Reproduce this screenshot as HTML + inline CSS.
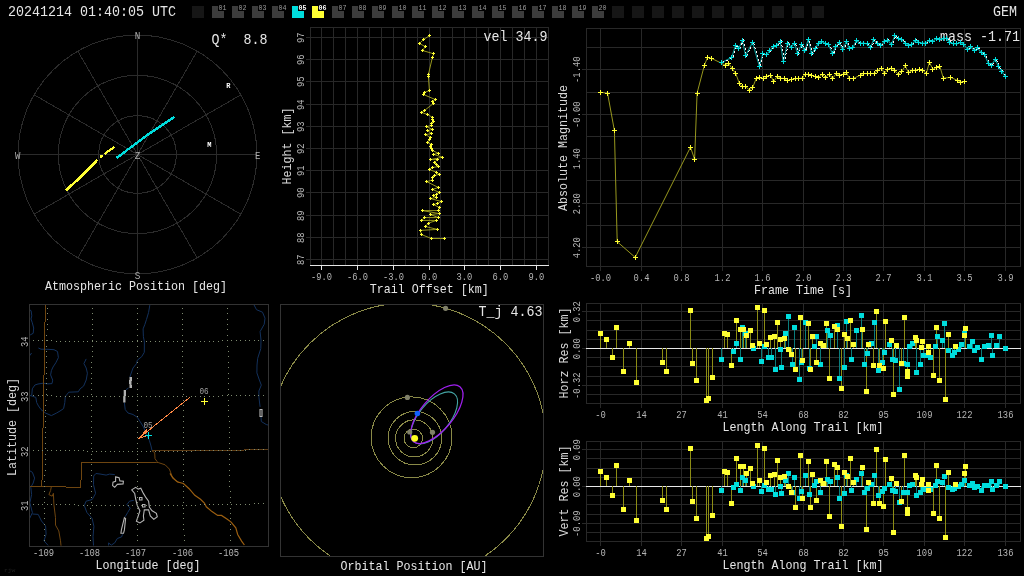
<!DOCTYPE html>
<html lang="en">
<head>
<meta charset="utf-8">
<title>GEM 20241214 01:40:05 UTC</title>
<style>
html,body{margin:0;padding:0;background:#000;overflow:hidden}
svg{display:block;will-change:transform;transform:translateZ(0)}
text{font-family:"Liberation Mono",monospace;white-space:pre}
</style>
</head>
<body>
<svg width="1024" height="576" viewBox="0 0 1024 576">
<rect width="1024" height="576" fill="#000"/>
<g id="header">
<text x="8" y="16.1" font-size="14" fill="#e6e6e6" textLength="168.0" lengthAdjust="spacingAndGlyphs" >20241214 01:40:05 UTC</text>
<text x="1017" y="16.1" font-size="14" fill="#e6e6e6" textLength="24.0" lengthAdjust="spacingAndGlyphs" text-anchor="end" >GEM</text>
<rect x="192" y="6" width="12" height="12" fill="#161616"/>
<path d="M212 6h6v5h6v7h-12z" fill="#3c3c3c"/>
<text x="218.4" y="10" font-size="7.5" fill="#9a9a9a" textLength="8.0" lengthAdjust="spacingAndGlyphs" >01</text>
<path d="M232 6h6v5h6v7h-12z" fill="#3c3c3c"/>
<text x="238.4" y="10" font-size="7.5" fill="#9a9a9a" textLength="8.0" lengthAdjust="spacingAndGlyphs" >02</text>
<path d="M252 6h6v5h6v7h-12z" fill="#3c3c3c"/>
<text x="258.4" y="10" font-size="7.5" fill="#9a9a9a" textLength="8.0" lengthAdjust="spacingAndGlyphs" >03</text>
<path d="M272 6h6v5h6v7h-12z" fill="#3c3c3c"/>
<text x="278.4" y="10" font-size="7.5" fill="#9a9a9a" textLength="8.0" lengthAdjust="spacingAndGlyphs" >04</text>
<path d="M292 6h6v5h6v7h-12z" fill="#00dddd"/>
<text x="298.4" y="10" font-size="7.5" fill="#ffffff" textLength="8.0" lengthAdjust="spacingAndGlyphs" font-weight="bold" >05</text>
<path d="M312 6h6v5h6v7h-12z" fill="#ffff33"/>
<text x="318.4" y="10" font-size="7.5" fill="#ffffff" textLength="8.0" lengthAdjust="spacingAndGlyphs" font-weight="bold" >06</text>
<path d="M332 6h6v5h6v7h-12z" fill="#3c3c3c"/>
<text x="338.4" y="10" font-size="7.5" fill="#9a9a9a" textLength="8.0" lengthAdjust="spacingAndGlyphs" >07</text>
<path d="M352 6h6v5h6v7h-12z" fill="#3c3c3c"/>
<text x="358.4" y="10" font-size="7.5" fill="#9a9a9a" textLength="8.0" lengthAdjust="spacingAndGlyphs" >08</text>
<path d="M372 6h6v5h6v7h-12z" fill="#3c3c3c"/>
<text x="378.4" y="10" font-size="7.5" fill="#9a9a9a" textLength="8.0" lengthAdjust="spacingAndGlyphs" >09</text>
<path d="M392 6h6v5h6v7h-12z" fill="#3c3c3c"/>
<text x="398.4" y="10" font-size="7.5" fill="#9a9a9a" textLength="8.0" lengthAdjust="spacingAndGlyphs" >10</text>
<path d="M412 6h6v5h6v7h-12z" fill="#3c3c3c"/>
<text x="418.4" y="10" font-size="7.5" fill="#9a9a9a" textLength="8.0" lengthAdjust="spacingAndGlyphs" >11</text>
<path d="M432 6h6v5h6v7h-12z" fill="#3c3c3c"/>
<text x="438.4" y="10" font-size="7.5" fill="#9a9a9a" textLength="8.0" lengthAdjust="spacingAndGlyphs" >12</text>
<path d="M452 6h6v5h6v7h-12z" fill="#3c3c3c"/>
<text x="458.4" y="10" font-size="7.5" fill="#9a9a9a" textLength="8.0" lengthAdjust="spacingAndGlyphs" >13</text>
<path d="M472 6h6v5h6v7h-12z" fill="#3c3c3c"/>
<text x="478.4" y="10" font-size="7.5" fill="#9a9a9a" textLength="8.0" lengthAdjust="spacingAndGlyphs" >14</text>
<path d="M492 6h6v5h6v7h-12z" fill="#3c3c3c"/>
<text x="498.4" y="10" font-size="7.5" fill="#9a9a9a" textLength="8.0" lengthAdjust="spacingAndGlyphs" >15</text>
<path d="M512 6h6v5h6v7h-12z" fill="#3c3c3c"/>
<text x="518.4" y="10" font-size="7.5" fill="#9a9a9a" textLength="8.0" lengthAdjust="spacingAndGlyphs" >16</text>
<path d="M532 6h6v5h6v7h-12z" fill="#3c3c3c"/>
<text x="538.4" y="10" font-size="7.5" fill="#9a9a9a" textLength="8.0" lengthAdjust="spacingAndGlyphs" >17</text>
<path d="M552 6h6v5h6v7h-12z" fill="#3c3c3c"/>
<text x="558.4" y="10" font-size="7.5" fill="#9a9a9a" textLength="8.0" lengthAdjust="spacingAndGlyphs" >18</text>
<path d="M572 6h6v5h6v7h-12z" fill="#3c3c3c"/>
<text x="578.4" y="10" font-size="7.5" fill="#9a9a9a" textLength="8.0" lengthAdjust="spacingAndGlyphs" >19</text>
<path d="M592 6h6v5h6v7h-12z" fill="#3c3c3c"/>
<text x="598.4" y="10" font-size="7.5" fill="#9a9a9a" textLength="8.0" lengthAdjust="spacingAndGlyphs" >20</text>
<rect x="612" y="6" width="12" height="12" fill="#161616"/>
<rect x="632" y="6" width="12" height="12" fill="#161616"/>
<rect x="652" y="6" width="12" height="12" fill="#161616"/>
<rect x="672" y="6" width="12" height="12" fill="#161616"/>
<rect x="692" y="6" width="12" height="12" fill="#161616"/>
<rect x="712" y="6" width="12" height="12" fill="#161616"/>
<rect x="732" y="6" width="12" height="12" fill="#161616"/>
<rect x="752" y="6" width="12" height="12" fill="#161616"/>
<rect x="772" y="6" width="12" height="12" fill="#161616"/>
<rect x="792" y="6" width="12" height="12" fill="#161616"/>
<rect x="812" y="6" width="12" height="12" fill="#161616"/>
</g>
<g id="polar">
<g fill="none" stroke="#2b2b2b" stroke-width="1" shape-rendering="crispEdges">
<circle cx="137.5" cy="154.5" r="38.9"/>
<circle cx="137.5" cy="154.5" r="79.2"/>
<circle cx="137.5" cy="154.5" r="119.4"/>
<line x1="137.5" y1="273.9" x2="137.5" y2="35.1"/>
<line x1="77.8" y1="257.9" x2="197.2" y2="51.1"/>
<line x1="34.1" y1="214.2" x2="240.9" y2="94.8"/>
<line x1="18.1" y1="154.5" x2="256.9" y2="154.5"/>
<line x1="34.1" y1="94.8" x2="240.9" y2="214.2"/>
<line x1="77.8" y1="51.1" x2="197.2" y2="257.9"/>
</g>
<text x="137.6" y="39.2" font-size="10" fill="#b0b0b0" textLength="5.6" lengthAdjust="spacingAndGlyphs" text-anchor="middle" >N</text>
<text x="137.6" y="279" font-size="10" fill="#b0b0b0" textLength="5.6" lengthAdjust="spacingAndGlyphs" text-anchor="middle" >S</text>
<text x="17.8" y="158.6" font-size="10" fill="#b0b0b0" textLength="5.4" lengthAdjust="spacingAndGlyphs" text-anchor="middle" >W</text>
<text x="257.8" y="158.6" font-size="10" fill="#b0b0b0" textLength="5.4" lengthAdjust="spacingAndGlyphs" text-anchor="middle" >E</text>
<text x="137.6" y="158.7" font-size="10" fill="#b0b0b0" textLength="5.6" lengthAdjust="spacingAndGlyphs" text-anchor="middle" >Z</text>
<text x="228.3" y="88.2" font-size="7" fill="#ffffff" text-anchor="middle" font-weight="bold" >R</text>
<text x="209.4" y="147.2" font-size="7" fill="#ffffff" text-anchor="middle" font-weight="bold" >M</text>
<g fill="none" stroke-linecap="butt" shape-rendering="crispEdges">
<path d="M116.3 157.9L122.2 154L128.2 149.2L134.3 144.9L141.8 139.2L148 134.6L154.2 130.4L164 123.8L174.5 116.8" stroke="#00dddd" stroke-width="2.4"/>
<path d="M65.6 190.4L72 185L76 181L82 176L88 169.5L97.2 159.8" stroke="#ffff33" stroke-width="2.8"/>
<path d="M100 154.5h2v0.5h0.5v2h-0.5v0.5h-2v-0.5h-0.5v-2h0.5z" fill="#ffff33" stroke="none"/>
<path d="M104.5 154L114.5 146.7" stroke="#ffff33" stroke-width="2.2"/>
</g>
<text x="267.5" y="44.3" font-size="14" fill="#e6e6e6" textLength="56.0" lengthAdjust="spacingAndGlyphs" text-anchor="end" >Q*  8.8</text>
<text x="136" y="290.3" font-size="13" fill="#e6e6e6" textLength="182.0" lengthAdjust="spacingAndGlyphs" text-anchor="middle" >Atmospheric Position [deg]</text>
</g>
<g id="trail">
<rect x="306" y="37" width="243" height="1" fill="#282828"/>
<rect x="306" y="59" width="243" height="1" fill="#282828"/>
<rect x="306" y="81" width="243" height="1" fill="#282828"/>
<rect x="306" y="104" width="243" height="1" fill="#282828"/>
<rect x="306" y="126" width="243" height="1" fill="#282828"/>
<rect x="306" y="148" width="243" height="1" fill="#282828"/>
<rect x="306" y="170" width="243" height="1" fill="#282828"/>
<rect x="306" y="192" width="243" height="1" fill="#282828"/>
<rect x="306" y="215" width="243" height="1" fill="#282828"/>
<rect x="306" y="237" width="243" height="1" fill="#282828"/>
<rect x="306" y="259" width="243" height="1" fill="#282828"/>
<rect x="321" y="27" width="1" height="239" fill="#282828"/>
<rect x="333" y="27" width="1" height="239" fill="#282828"/>
<rect x="345" y="27" width="1" height="239" fill="#282828"/>
<rect x="357" y="27" width="1" height="239" fill="#282828"/>
<rect x="369" y="27" width="1" height="239" fill="#282828"/>
<rect x="381" y="27" width="1" height="239" fill="#282828"/>
<rect x="393" y="27" width="1" height="239" fill="#282828"/>
<rect x="405" y="27" width="1" height="239" fill="#282828"/>
<rect x="417" y="27" width="1" height="239" fill="#282828"/>
<rect x="429" y="27" width="1" height="239" fill="#282828"/>
<rect x="440" y="27" width="1" height="239" fill="#282828"/>
<rect x="452" y="27" width="1" height="239" fill="#282828"/>
<rect x="464" y="27" width="1" height="239" fill="#282828"/>
<rect x="476" y="27" width="1" height="239" fill="#282828"/>
<rect x="488" y="27" width="1" height="239" fill="#282828"/>
<rect x="500" y="27" width="1" height="239" fill="#282828"/>
<rect x="512" y="27" width="1" height="239" fill="#282828"/>
<rect x="524" y="27" width="1" height="239" fill="#282828"/>
<rect x="536" y="27" width="1" height="239" fill="#282828"/>
<rect x="310" y="27" width="239" height="1" fill="#282828"/>
<rect x="310" y="27" width="1" height="239" fill="#282828"/>
<rect x="548" y="27" width="1" height="239" fill="#282828"/>
<rect x="310" y="265" width="239" height="1" fill="#e6e6e6"/>
<rect x="321" y="265" width="1" height="5" fill="#e6e6e6"/>
<text x="321.5" y="280.3" font-size="10" fill="#b4b4b4" textLength="21.0" lengthAdjust="spacingAndGlyphs" text-anchor="middle" >-9.0</text>
<rect x="357" y="265" width="1" height="5" fill="#e6e6e6"/>
<text x="357.5" y="280.3" font-size="10" fill="#b4b4b4" textLength="21.0" lengthAdjust="spacingAndGlyphs" text-anchor="middle" >-6.0</text>
<rect x="393" y="265" width="1" height="5" fill="#e6e6e6"/>
<text x="393.5" y="280.3" font-size="10" fill="#b4b4b4" textLength="21.0" lengthAdjust="spacingAndGlyphs" text-anchor="middle" >-3.0</text>
<rect x="429" y="265" width="1" height="5" fill="#e6e6e6"/>
<text x="429.5" y="280.3" font-size="10" fill="#b4b4b4" textLength="15.8" lengthAdjust="spacingAndGlyphs" text-anchor="middle" >0.0</text>
<rect x="464" y="265" width="1" height="5" fill="#e6e6e6"/>
<text x="464.5" y="280.3" font-size="10" fill="#b4b4b4" textLength="15.8" lengthAdjust="spacingAndGlyphs" text-anchor="middle" >3.0</text>
<rect x="500" y="265" width="1" height="5" fill="#e6e6e6"/>
<text x="500.5" y="280.3" font-size="10" fill="#b4b4b4" textLength="15.8" lengthAdjust="spacingAndGlyphs" text-anchor="middle" >6.0</text>
<rect x="536" y="265" width="1" height="5" fill="#e6e6e6"/>
<text x="536.5" y="280.3" font-size="10" fill="#b4b4b4" textLength="15.8" lengthAdjust="spacingAndGlyphs" text-anchor="middle" >9.0</text>
<text x="304" y="37.7" font-size="10" fill="#b4b4b4" textLength="10.6" lengthAdjust="spacingAndGlyphs" text-anchor="middle" transform="rotate(-90 304 37.7)" >97</text>
<text x="304" y="59.7" font-size="10" fill="#b4b4b4" textLength="10.6" lengthAdjust="spacingAndGlyphs" text-anchor="middle" transform="rotate(-90 304 59.7)" >96</text>
<text x="304" y="81.7" font-size="10" fill="#b4b4b4" textLength="10.6" lengthAdjust="spacingAndGlyphs" text-anchor="middle" transform="rotate(-90 304 81.7)" >95</text>
<text x="304" y="104.7" font-size="10" fill="#b4b4b4" textLength="10.6" lengthAdjust="spacingAndGlyphs" text-anchor="middle" transform="rotate(-90 304 104.7)" >94</text>
<text x="304" y="126.7" font-size="10" fill="#b4b4b4" textLength="10.6" lengthAdjust="spacingAndGlyphs" text-anchor="middle" transform="rotate(-90 304 126.7)" >93</text>
<text x="304" y="148.7" font-size="10" fill="#b4b4b4" textLength="10.6" lengthAdjust="spacingAndGlyphs" text-anchor="middle" transform="rotate(-90 304 148.7)" >92</text>
<text x="304" y="170.7" font-size="10" fill="#b4b4b4" textLength="10.6" lengthAdjust="spacingAndGlyphs" text-anchor="middle" transform="rotate(-90 304 170.7)" >91</text>
<text x="304" y="192.7" font-size="10" fill="#b4b4b4" textLength="10.6" lengthAdjust="spacingAndGlyphs" text-anchor="middle" transform="rotate(-90 304 192.7)" >90</text>
<text x="304" y="215.7" font-size="10" fill="#b4b4b4" textLength="10.6" lengthAdjust="spacingAndGlyphs" text-anchor="middle" transform="rotate(-90 304 215.7)" >89</text>
<text x="304" y="237.7" font-size="10" fill="#b4b4b4" textLength="10.6" lengthAdjust="spacingAndGlyphs" text-anchor="middle" transform="rotate(-90 304 237.7)" >88</text>
<text x="304" y="259.7" font-size="10" fill="#b4b4b4" textLength="10.6" lengthAdjust="spacingAndGlyphs" text-anchor="middle" transform="rotate(-90 304 259.7)" >87</text>
<text x="291.3" y="146" font-size="13" fill="#d8d8d8" textLength="77.0" lengthAdjust="spacingAndGlyphs" text-anchor="middle" transform="rotate(-90 291.3 146)" >Height [km]</text>
<text x="429.3" y="293.3" font-size="13" fill="#e6e6e6" textLength="119.0" lengthAdjust="spacingAndGlyphs" text-anchor="middle" >Trail Offset [km]</text>
<text x="547.6" y="41" font-size="14" fill="#e6e6e6" textLength="64.0" lengthAdjust="spacingAndGlyphs" text-anchor="end" >vel 34.9</text>
<path d="M429.4 35.7L423.5 39.6L419.4 43.5L425.3 46.6L422.5 50.5L433.7 53.8L432.4 57.4L428.4 74.6L428.4 76.6L429.4 90.6L424.3 92.5L423.5 94.5L435.4 99.6L432.4 101.4L433.4 103.5L424.7 110.3L421.5 112.5L427.5 114.4L432.4 117.4L432.4 119.6L433.4 121.5L431.4 123.5L431.4 125.5L426.5 126.6L432.4 129.4L427.5 130.6L431.4 133.6L425.5 134.6L430.4 137.5L429.4 139.4L427.5 142.4L431.4 144.5L430.4 146.6L431.6 148.7L432.4 150.5L438.4 153.3L433.7 154.4L442.5 157.2L430.4 159.6L437.4 159.6L434.4 162.6L436.5 164.4L438.4 166.6L432.4 167.5L429.4 169.5L436.5 172.3L439.4 174.4L434.4 175.4L432.4 177.8L432.4 180.2L426.5 181.5L438.4 187.5L432.4 189.4L439.4 192.4L436.5 194.2L433.4 195.4L436.5 197.5L430.4 198.5L441.3 201.5L437.4 203.5L433.4 204.5L439.4 207.5L438.4 210.6L422.5 210.6L439.4 213.6L430.4 214.5L438.4 217.6L424.3 217.6L421.5 220.4L436.5 220.4L428.4 223.1L425.3 226.5L437.4 229.4L420.4 230.4L421.5 234.6L431.4 238.5L444.4 238.5" fill="none" stroke="#98981e" stroke-width="1"/>
<path d="M428 35h3v1h-3zM429 34h1v3h-1zM422 39h3v1h-3zM423 38h1v3h-1zM418 43h3v1h-3zM419 42h1v3h-1zM424 46h3v1h-3zM425 45h1v3h-1zM421 50h3v1h-3zM422 49h1v3h-1zM432 53h3v1h-3zM433 52h1v3h-1zM431 57h3v1h-3zM432 56h1v3h-1zM427 74h3v1h-3zM428 73h1v3h-1zM427 76h3v1h-3zM428 75h1v3h-1zM428 90h3v1h-3zM429 89h1v3h-1zM423 92h3v1h-3zM424 91h1v3h-1zM422 94h3v1h-3zM423 93h1v3h-1zM434 99h3v1h-3zM435 98h1v3h-1zM431 101h3v1h-3zM432 100h1v3h-1zM432 103h3v1h-3zM433 102h1v3h-1zM423 110h3v1h-3zM424 109h1v3h-1zM420 112h3v1h-3zM421 111h1v3h-1zM426 114h3v1h-3zM427 113h1v3h-1zM431 117h3v1h-3zM432 116h1v3h-1zM431 119h3v1h-3zM432 118h1v3h-1zM432 121h3v1h-3zM433 120h1v3h-1zM430 123h3v1h-3zM431 122h1v3h-1zM430 125h3v1h-3zM431 124h1v3h-1zM425 126h3v1h-3zM426 125h1v3h-1zM431 129h3v1h-3zM432 128h1v3h-1zM426 130h3v1h-3zM427 129h1v3h-1zM430 133h3v1h-3zM431 132h1v3h-1zM424 134h3v1h-3zM425 133h1v3h-1zM429 137h3v1h-3zM430 136h1v3h-1zM428 139h3v1h-3zM429 138h1v3h-1zM426 142h3v1h-3zM427 141h1v3h-1zM430 144h3v1h-3zM431 143h1v3h-1zM429 146h3v1h-3zM430 145h1v3h-1zM430 148h3v1h-3zM431 147h1v3h-1zM431 150h3v1h-3zM432 149h1v3h-1zM437 153h3v1h-3zM438 152h1v3h-1zM432 154h3v1h-3zM433 153h1v3h-1zM441 157h3v1h-3zM442 156h1v3h-1zM429 159h3v1h-3zM430 158h1v3h-1zM436 159h3v1h-3zM437 158h1v3h-1zM433 162h3v1h-3zM434 161h1v3h-1zM435 164h3v1h-3zM436 163h1v3h-1zM437 166h3v1h-3zM438 165h1v3h-1zM431 167h3v1h-3zM432 166h1v3h-1zM428 169h3v1h-3zM429 168h1v3h-1zM435 172h3v1h-3zM436 171h1v3h-1zM438 174h3v1h-3zM439 173h1v3h-1zM433 175h3v1h-3zM434 174h1v3h-1zM431 177h3v1h-3zM432 176h1v3h-1zM431 180h3v1h-3zM432 179h1v3h-1zM425 181h3v1h-3zM426 180h1v3h-1zM437 187h3v1h-3zM438 186h1v3h-1zM431 189h3v1h-3zM432 188h1v3h-1zM438 192h3v1h-3zM439 191h1v3h-1zM435 194h3v1h-3zM436 193h1v3h-1zM432 195h3v1h-3zM433 194h1v3h-1zM435 197h3v1h-3zM436 196h1v3h-1zM429 198h3v1h-3zM430 197h1v3h-1zM440 201h3v1h-3zM441 200h1v3h-1zM436 203h3v1h-3zM437 202h1v3h-1zM432 204h3v1h-3zM433 203h1v3h-1zM438 207h3v1h-3zM439 206h1v3h-1zM437 210h3v1h-3zM438 209h1v3h-1zM421 210h3v1h-3zM422 209h1v3h-1zM438 213h3v1h-3zM439 212h1v3h-1zM429 214h3v1h-3zM430 213h1v3h-1zM437 217h3v1h-3zM438 216h1v3h-1zM423 217h3v1h-3zM424 216h1v3h-1zM420 220h3v1h-3zM421 219h1v3h-1zM435 220h3v1h-3zM436 219h1v3h-1zM427 223h3v1h-3zM428 222h1v3h-1zM424 226h3v1h-3zM425 225h1v3h-1zM436 229h3v1h-3zM437 228h1v3h-1zM419 230h3v1h-3zM420 229h1v3h-1zM420 234h3v1h-3zM421 233h1v3h-1zM430 238h3v1h-3zM431 237h1v3h-1zM443 238h3v1h-3zM444 237h1v3h-1z" fill="#ffff33" shape-rendering="crispEdges"/>
</g>
<g id="lc">
<rect x="586" y="47" width="435" height="1" fill="#282828"/>
<rect x="586" y="69" width="435" height="1" fill="#282828"/>
<rect x="586" y="92" width="435" height="1" fill="#282828"/>
<rect x="586" y="114" width="435" height="1" fill="#282828"/>
<rect x="586" y="136" width="435" height="1" fill="#282828"/>
<rect x="586" y="158" width="435" height="1" fill="#282828"/>
<rect x="586" y="180" width="435" height="1" fill="#282828"/>
<rect x="586" y="203" width="435" height="1" fill="#282828"/>
<rect x="586" y="225" width="435" height="1" fill="#282828"/>
<rect x="586" y="247" width="435" height="1" fill="#282828"/>
<rect x="600" y="28" width="1" height="239" fill="#282828"/>
<rect x="641" y="28" width="1" height="239" fill="#282828"/>
<rect x="681" y="28" width="1" height="239" fill="#282828"/>
<rect x="722" y="28" width="1" height="239" fill="#282828"/>
<rect x="762" y="28" width="1" height="239" fill="#282828"/>
<rect x="803" y="28" width="1" height="239" fill="#282828"/>
<rect x="843" y="28" width="1" height="239" fill="#282828"/>
<rect x="883" y="28" width="1" height="239" fill="#282828"/>
<rect x="924" y="28" width="1" height="239" fill="#282828"/>
<rect x="964" y="28" width="1" height="239" fill="#282828"/>
<rect x="1005" y="28" width="1" height="239" fill="#282828"/>
<rect x="586" y="28" width="435" height="1" fill="#282828"/>
<rect x="586" y="266" width="435" height="1" fill="#282828"/>
<rect x="586" y="28" width="1" height="239" fill="#282828"/>
<rect x="1020" y="28" width="1" height="239" fill="#282828"/>
<rect x="582" y="69" width="5" height="1" fill="#282828"/>
<rect x="582" y="114" width="5" height="1" fill="#282828"/>
<rect x="582" y="158" width="5" height="1" fill="#282828"/>
<rect x="582" y="203" width="5" height="1" fill="#282828"/>
<rect x="582" y="247" width="5" height="1" fill="#282828"/>
<rect x="600" y="266" width="1" height="5" fill="#282828"/>
<rect x="641" y="266" width="1" height="5" fill="#282828"/>
<rect x="681" y="266" width="1" height="5" fill="#282828"/>
<rect x="722" y="266" width="1" height="5" fill="#282828"/>
<rect x="762" y="266" width="1" height="5" fill="#282828"/>
<rect x="803" y="266" width="1" height="5" fill="#282828"/>
<rect x="843" y="266" width="1" height="5" fill="#282828"/>
<rect x="883" y="266" width="1" height="5" fill="#282828"/>
<rect x="924" y="266" width="1" height="5" fill="#282828"/>
<rect x="964" y="266" width="1" height="5" fill="#282828"/>
<rect x="1005" y="266" width="1" height="5" fill="#282828"/>
<text x="600.5" y="281.3" font-size="10" fill="#b4b4b4" textLength="21.2" lengthAdjust="spacingAndGlyphs" text-anchor="middle" >-0.0</text>
<text x="641.5" y="281.3" font-size="10" fill="#b4b4b4" textLength="15.9" lengthAdjust="spacingAndGlyphs" text-anchor="middle" >0.4</text>
<text x="681.5" y="281.3" font-size="10" fill="#b4b4b4" textLength="15.9" lengthAdjust="spacingAndGlyphs" text-anchor="middle" >0.8</text>
<text x="722.5" y="281.3" font-size="10" fill="#b4b4b4" textLength="15.9" lengthAdjust="spacingAndGlyphs" text-anchor="middle" >1.2</text>
<text x="762.5" y="281.3" font-size="10" fill="#b4b4b4" textLength="15.9" lengthAdjust="spacingAndGlyphs" text-anchor="middle" >1.6</text>
<text x="803.5" y="281.3" font-size="10" fill="#b4b4b4" textLength="15.9" lengthAdjust="spacingAndGlyphs" text-anchor="middle" >2.0</text>
<text x="843.5" y="281.3" font-size="10" fill="#b4b4b4" textLength="15.9" lengthAdjust="spacingAndGlyphs" text-anchor="middle" >2.3</text>
<text x="883.5" y="281.3" font-size="10" fill="#b4b4b4" textLength="15.9" lengthAdjust="spacingAndGlyphs" text-anchor="middle" >2.7</text>
<text x="924.5" y="281.3" font-size="10" fill="#b4b4b4" textLength="15.9" lengthAdjust="spacingAndGlyphs" text-anchor="middle" >3.1</text>
<text x="964.5" y="281.3" font-size="10" fill="#b4b4b4" textLength="15.9" lengthAdjust="spacingAndGlyphs" text-anchor="middle" >3.5</text>
<text x="1005.5" y="281.3" font-size="10" fill="#b4b4b4" textLength="15.9" lengthAdjust="spacingAndGlyphs" text-anchor="middle" >3.9</text>
<text x="580" y="69.7" font-size="10" fill="#b4b4b4" textLength="26.5" lengthAdjust="spacingAndGlyphs" text-anchor="middle" transform="rotate(-90 580 69.7)" >-1.40</text>
<text x="580" y="114.7" font-size="10" fill="#b4b4b4" textLength="26.5" lengthAdjust="spacingAndGlyphs" text-anchor="middle" transform="rotate(-90 580 114.7)" >-0.00</text>
<text x="580" y="158.7" font-size="10" fill="#b4b4b4" textLength="21.2" lengthAdjust="spacingAndGlyphs" text-anchor="middle" transform="rotate(-90 580 158.7)" >1.40</text>
<text x="580" y="203.7" font-size="10" fill="#b4b4b4" textLength="21.2" lengthAdjust="spacingAndGlyphs" text-anchor="middle" transform="rotate(-90 580 203.7)" >2.80</text>
<text x="580" y="247.7" font-size="10" fill="#b4b4b4" textLength="21.2" lengthAdjust="spacingAndGlyphs" text-anchor="middle" transform="rotate(-90 580 247.7)" >4.20</text>
<text x="567.4" y="148" font-size="13" fill="#d8d8d8" textLength="126.0" lengthAdjust="spacingAndGlyphs" text-anchor="middle" transform="rotate(-90 567.4 148)" >Absolute Magnitude</text>
<text x="803" y="294.3" font-size="13" fill="#e6e6e6" textLength="98.0" lengthAdjust="spacingAndGlyphs" text-anchor="middle" >Frame Time [s]</text>
<text x="1020" y="40.5" font-size="14" fill="#e6e6e6" textLength="80.0" lengthAdjust="spacingAndGlyphs" text-anchor="end" >mass -1.71</text>
<path d="M600.6 92.2L607.6 93.4L614.4 130.6L617.2 241.7L635.2 257.4L690.5 147.2L694.6 159.3L697.1 93.0L704.3 65.6L707.5 57.4L711.4 58.3L725.7 65.3L728.5 63.2L732.2 68.8L735.8 73.6L739.3 83.3L742.4 86.8L745.6 86.4L749.3 90.0L752.8 87.2L756.3 78.2L759.7 77.8L763.6 78.9L766.7 76.4L770.6 75.0L773.6 81.9L777.1 76.4L780.6 78.1L784.0 78.5L787.5 80.8L791.3 79.4L795.1 78.9L798.6 78.5L802.1 78.2L805.1 74.3L808.3 74.3L811.8 75.0L815.3 76.7L818.5 77.4L822.2 74.3L825.4 77.4L829.2 74.3L832.6 78.5L836.1 73.6L839.6 75.0L843.0 74.3L846.5 72.5L849.3 78.5L853.2 78.5L860.1 75.3L863.2 73.6L867.1 73.6L870.6 73.6L874.0 73.6L877.5 70.6L881.2 68.1L884.4 73.3L887.5 69.4L891.4 68.1L894.9 70.8L898.3 74.3L901.8 71.5L905.3 65.7L908.3 72.6L912.2 70.6L915.7 70.1L919.4 69.4L922.6 70.1L926.4 73.3L929.4 62.2L932.9 69.4L936.4 67.4L939.9 66.4L943.3 78.2L950.7 77.4L957.2 80.3L960.4 82.2L964.6 81.5" fill="none" stroke="#98981e" stroke-width="1"/>
<path d="M721.5 62.5L731.7 57.6L735.4 45.8L738.6 48.6L742.4 40.6L745.6 55.6L752.5 42.4L759.4 66.3L762.8 53.9L766.4 54.9L769.9 50.7L773.6 46.5L776.4 45.6L780.3 41.4L783.3 61.8L787.5 43.1L791.0 47.2L794.4 43.1L797.6 53.5L801.4 44.6L804.9 50.9L808.3 39.2L811.5 53.8L815.0 48.9L818.5 43.1L821.5 41.9L825.0 43.1L828.5 44.4L832.4 53.8L835.8 46.5L839.3 42.4L842.8 49.7L846.3 41.4L849.3 48.6L852.8 47.9L856.3 40.7L860.1 43.1L863.6 43.1L867.1 43.8L870.6 47.2L873.6 39.6L877.1 43.8L880.6 45.6L884.0 41.9L887.5 40.0L891.4 44.4L894.9 35.8L898.3 38.9L901.6 39.8L905.1 43.1L908.6 45.6L911.8 44.4L915.7 40.0L918.8 42.4L922.2 43.1L925.7 43.1L929.4 40.3L932.9 41.4L936.4 38.2L939.9 39.6L943.1 38.9L946.5 38.2L949.6 42.4L953.5 43.8L956.9 43.8L960.7 42.4L963.9 44.4L967.6 49.3L970.8 46.9L974.3 50.7L977.5 47.9L981.3 52.8L984.4 54.2L988.2 63.2L991.4 65.3L995.4 59.0L998.3 66.7L1001.8 71.5L1005.3 76.4" fill="none" stroke="#0a9090" stroke-width="1.2"/>
<path d="M722.5 62.5L732.7 57.6L736.4 45.8L739.6 48.6L743.4 40.6L746.6 55.6L753.5 42.4L760.4 66.3L763.8 53.9L767.4 54.9L770.9 50.7L774.6 46.5L777.4 45.6L781.3 41.4L784.3 61.8L788.5 43.1L792.0 47.2L795.4 43.1L798.6 53.5L802.4 44.6L805.9 50.9L809.3 39.2L812.5 53.8L816.0 48.9L819.5 43.1L822.5 41.9L826.0 43.1L829.5 44.4L833.4 53.8L836.8 46.5L840.3 42.4L843.8 49.7L847.3 41.4L850.3 48.6L853.8 47.9L857.3 40.7L861.1 43.1L864.6 43.1L868.1 43.8L871.6 47.2L874.6 39.6L878.1 43.8L881.6 45.6L885.0 41.9L888.5 40.0L892.4 44.4L895.9 35.8L899.3 38.9L902.6 39.8L906.1 43.1L909.6 45.6L912.8 44.4L916.7 40.0L919.8 42.4L923.2 43.1L926.7 43.1L930.4 40.3L933.9 41.4L937.4 38.2L940.9 39.6L944.1 38.9L947.5 38.2L950.6 42.4L954.5 43.8L957.9 43.8L961.7 42.4L964.9 44.4L968.6 49.3L971.8 46.9L975.3 50.7L978.5 47.9L982.3 52.8L985.4 54.2L989.2 63.2L992.4 65.3L996.4 59.0L999.3 66.7L1002.8 71.5L1006.3 76.4" fill="none" stroke="#fff4f4" stroke-width="1" stroke-dasharray="2 2" shape-rendering="crispEdges"/>
<path d="M598 92h5v1h-5zM600 90h1v5h-1zM605 93h5v1h-5zM607 91h1v5h-1zM612 130h5v1h-5zM614 128h1v5h-1zM615 241h5v1h-5zM617 239h1v5h-1zM633 257h5v1h-5zM635 255h1v5h-1zM688 147h5v1h-5zM690 145h1v5h-1zM692 159h5v1h-5zM694 157h1v5h-1zM695 93h5v1h-5zM697 91h1v5h-1zM702 65h5v1h-5zM704 63h1v5h-1zM705 57h5v1h-5zM707 55h1v5h-1zM709 58h5v1h-5zM711 56h1v5h-1zM723 65h5v1h-5zM725 63h1v5h-1zM726 63h5v1h-5zM728 61h1v5h-1zM730 68h5v1h-5zM732 66h1v5h-1zM733 73h5v1h-5zM735 71h1v5h-1zM737 83h5v1h-5zM739 81h1v5h-1zM740 86h5v1h-5zM742 84h1v5h-1zM743 86h5v1h-5zM745 84h1v5h-1zM747 90h5v1h-5zM749 88h1v5h-1zM750 87h5v1h-5zM752 85h1v5h-1zM754 78h5v1h-5zM756 76h1v5h-1zM757 77h5v1h-5zM759 75h1v5h-1zM761 78h5v1h-5zM763 76h1v5h-1zM764 76h5v1h-5zM766 74h1v5h-1zM768 75h5v1h-5zM770 73h1v5h-1zM771 81h5v1h-5zM773 79h1v5h-1zM775 76h5v1h-5zM777 74h1v5h-1zM778 78h5v1h-5zM780 76h1v5h-1zM782 78h5v1h-5zM784 76h1v5h-1zM785 80h5v1h-5zM787 78h1v5h-1zM789 79h5v1h-5zM791 77h1v5h-1zM793 78h5v1h-5zM795 76h1v5h-1zM796 78h5v1h-5zM798 76h1v5h-1zM800 78h5v1h-5zM802 76h1v5h-1zM803 74h5v1h-5zM805 72h1v5h-1zM806 74h5v1h-5zM808 72h1v5h-1zM809 75h5v1h-5zM811 73h1v5h-1zM813 76h5v1h-5zM815 74h1v5h-1zM816 77h5v1h-5zM818 75h1v5h-1zM820 74h5v1h-5zM822 72h1v5h-1zM823 77h5v1h-5zM825 75h1v5h-1zM827 74h5v1h-5zM829 72h1v5h-1zM830 78h5v1h-5zM832 76h1v5h-1zM834 73h5v1h-5zM836 71h1v5h-1zM837 75h5v1h-5zM839 73h1v5h-1zM841 74h5v1h-5zM843 72h1v5h-1zM844 72h5v1h-5zM846 70h1v5h-1zM847 78h5v1h-5zM849 76h1v5h-1zM851 78h5v1h-5zM853 76h1v5h-1zM858 75h5v1h-5zM860 73h1v5h-1zM861 73h5v1h-5zM863 71h1v5h-1zM865 73h5v1h-5zM867 71h1v5h-1zM868 73h5v1h-5zM870 71h1v5h-1zM872 73h5v1h-5zM874 71h1v5h-1zM875 70h5v1h-5zM877 68h1v5h-1zM879 68h5v1h-5zM881 66h1v5h-1zM882 73h5v1h-5zM884 71h1v5h-1zM885 69h5v1h-5zM887 67h1v5h-1zM889 68h5v1h-5zM891 66h1v5h-1zM892 70h5v1h-5zM894 68h1v5h-1zM896 74h5v1h-5zM898 72h1v5h-1zM899 71h5v1h-5zM901 69h1v5h-1zM903 65h5v1h-5zM905 63h1v5h-1zM906 72h5v1h-5zM908 70h1v5h-1zM910 70h5v1h-5zM912 68h1v5h-1zM913 70h5v1h-5zM915 68h1v5h-1zM917 69h5v1h-5zM919 67h1v5h-1zM920 70h5v1h-5zM922 68h1v5h-1zM924 73h5v1h-5zM926 71h1v5h-1zM927 62h5v1h-5zM929 60h1v5h-1zM930 69h5v1h-5zM932 67h1v5h-1zM934 67h5v1h-5zM936 65h1v5h-1zM937 66h5v1h-5zM939 64h1v5h-1zM941 78h5v1h-5zM943 76h1v5h-1zM948 77h5v1h-5zM950 75h1v5h-1zM955 80h5v1h-5zM957 78h1v5h-1zM958 82h5v1h-5zM960 80h1v5h-1zM962 81h5v1h-5zM964 79h1v5h-1z" fill="#ffff33" shape-rendering="crispEdges"/>
<path d="M719 62h5v1h-5zM721 60h1v5h-1zM729 57h5v1h-5zM731 55h1v5h-1zM733 45h5v1h-5zM735 43h1v5h-1zM736 48h5v1h-5zM738 46h1v5h-1zM740 40h5v1h-5zM742 38h1v5h-1zM743 55h5v1h-5zM745 53h1v5h-1zM750 42h5v1h-5zM752 40h1v5h-1zM757 66h5v1h-5zM759 64h1v5h-1zM760 53h5v1h-5zM762 51h1v5h-1zM764 54h5v1h-5zM766 52h1v5h-1zM767 50h5v1h-5zM769 48h1v5h-1zM771 46h5v1h-5zM773 44h1v5h-1zM774 45h5v1h-5zM776 43h1v5h-1zM778 41h5v1h-5zM780 39h1v5h-1zM781 61h5v1h-5zM783 59h1v5h-1zM785 43h5v1h-5zM787 41h1v5h-1zM789 47h5v1h-5zM791 45h1v5h-1zM792 43h5v1h-5zM794 41h1v5h-1zM795 53h5v1h-5zM797 51h1v5h-1zM799 44h5v1h-5zM801 42h1v5h-1zM802 50h5v1h-5zM804 48h1v5h-1zM806 39h5v1h-5zM808 37h1v5h-1zM809 53h5v1h-5zM811 51h1v5h-1zM813 48h5v1h-5zM815 46h1v5h-1zM816 43h5v1h-5zM818 41h1v5h-1zM819 41h5v1h-5zM821 39h1v5h-1zM823 43h5v1h-5zM825 41h1v5h-1zM826 44h5v1h-5zM828 42h1v5h-1zM830 53h5v1h-5zM832 51h1v5h-1zM833 46h5v1h-5zM835 44h1v5h-1zM837 42h5v1h-5zM839 40h1v5h-1zM840 49h5v1h-5zM842 47h1v5h-1zM844 41h5v1h-5zM846 39h1v5h-1zM847 48h5v1h-5zM849 46h1v5h-1zM850 47h5v1h-5zM852 45h1v5h-1zM854 40h5v1h-5zM856 38h1v5h-1zM858 43h5v1h-5zM860 41h1v5h-1zM861 43h5v1h-5zM863 41h1v5h-1zM865 43h5v1h-5zM867 41h1v5h-1zM868 47h5v1h-5zM870 45h1v5h-1zM871 39h5v1h-5zM873 37h1v5h-1zM875 43h5v1h-5zM877 41h1v5h-1zM878 45h5v1h-5zM880 43h1v5h-1zM882 41h5v1h-5zM884 39h1v5h-1zM885 40h5v1h-5zM887 38h1v5h-1zM889 44h5v1h-5zM891 42h1v5h-1zM892 35h5v1h-5zM894 33h1v5h-1zM896 38h5v1h-5zM898 36h1v5h-1zM899 39h5v1h-5zM901 37h1v5h-1zM903 43h5v1h-5zM905 41h1v5h-1zM906 45h5v1h-5zM908 43h1v5h-1zM909 44h5v1h-5zM911 42h1v5h-1zM913 40h5v1h-5zM915 38h1v5h-1zM916 42h5v1h-5zM918 40h1v5h-1zM920 43h5v1h-5zM922 41h1v5h-1zM923 43h5v1h-5zM925 41h1v5h-1zM927 40h5v1h-5zM929 38h1v5h-1zM930 41h5v1h-5zM932 39h1v5h-1zM934 38h5v1h-5zM936 36h1v5h-1zM937 39h5v1h-5zM939 37h1v5h-1zM941 38h5v1h-5zM943 36h1v5h-1zM944 38h5v1h-5zM946 36h1v5h-1zM947 42h5v1h-5zM949 40h1v5h-1zM951 43h5v1h-5zM953 41h1v5h-1zM954 43h5v1h-5zM956 41h1v5h-1zM958 42h5v1h-5zM960 40h1v5h-1zM961 44h5v1h-5zM963 42h1v5h-1zM965 49h5v1h-5zM967 47h1v5h-1zM968 46h5v1h-5zM970 44h1v5h-1zM972 50h5v1h-5zM974 48h1v5h-1zM975 47h5v1h-5zM977 45h1v5h-1zM979 52h5v1h-5zM981 50h1v5h-1zM982 54h5v1h-5zM984 52h1v5h-1zM986 63h5v1h-5zM988 61h1v5h-1zM989 65h5v1h-5zM991 63h1v5h-1zM993 59h5v1h-5zM995 57h1v5h-1zM996 66h5v1h-5zM998 64h1v5h-1zM999 71h5v1h-5zM1001 69h1v5h-1zM1003 76h5v1h-5zM1005 74h1v5h-1z" fill="#00dddd" shape-rendering="crispEdges"/>
</g>
<g id="map">
<clipPath id="mc"><rect x="29" y="304" width="239" height="242"/></clipPath>
<g clip-path="url(#mc)" fill="none" stroke-width="1">
<path d="M29.7 309.8L31.1 310.7L31.8 315.9L31 319L32.3 322.8L33.7 328L33.2 333.3L30.1 335" stroke="#13315c" stroke-width="1"/>
<path d="M30 355.5L31.5 353" stroke="#13315c" stroke-width="1"/>
<path d="M38.4 348L41 349.2L48 349.3L54 349.7L57.5 351.5L58.4 357.6L55.8 362.8L53 367L51.4 370.6L50.6 374.9L52.7 380.1L52 383.6L48 383.9L43.3 383.2L38 384L34.9 385L32.3 388.8L31.8 394.9L30.1 395.8" stroke="#13315c" stroke-width="1"/>
<path d="M30.6 395.6L35.8 397.4L36.7 402.6L38.5 406L41 409.5L45.4 413L51.4 415.6L56.6 413L60 411L63.6 408.6L64.8 402.6L65.3 396.5L68.8 392.2L78.3 391.8L80.1 388.8L83.6 386.1L86.2 380L87.4 373.2L86.2 368L83.9 363.6L86.2 358.9" stroke="#13315c" stroke-width="1"/>
<path d="M149.8 305.1L148.6 312.4L146.5 319.4L144.8 324.6L143.1 328.9L143.4 336.7L144.4 341.9L144.3 352.3L141.7 356.7L137.3 360.2L136.5 363.6L133 368L130.9 374L129.9 377" stroke="#13315c" stroke-width="1"/>
<path d="M128.6 388L126 389.7" stroke="#13315c" stroke-width="1"/>
<path d="M124.4 402.6L125.2 409.5L128 413L133 414.5L137.3 417.3L140 421.4L143.4 426.9L146 433L149.5 440.8L151 446L152.1 450.7" stroke="#13315c" stroke-width="1"/>
<path d="M254 304.9L256.5 309.7L262.5 312.2L265 318.2L264.2 324.3L260.1 331.6L261 340L260.8 348.6L257.7 358.3L257 365L256.9 372.9L259 379L261.3 385.1L258.9 391L258.9 397.2L260.1 406.9" stroke="#13315c" stroke-width="1"/>
<path d="M261 417L261.3 421.5L266.2 424.5L268 425" stroke="#13315c" stroke-width="1"/>
<path d="M29.6 470.7L32.4 472.3L34.6 478.1L33.2 483L30.8 487.2L31.6 494.6L29.9 502.8L32.4 512.7L29.6 518.5" stroke="#13315c" stroke-width="1"/>
<path d="M32.4 514L38.2 514.4L41.5 521L45.6 525.9L46.1 534.2L44 540.8L48.1 545.4" stroke="#13315c" stroke-width="1"/>
<path d="M114.8 474.6L109.6 474.1L106.1 475.1L100 474L95.9 473.5L93.7 476L93.5 484.7L95.6 493.4L92.2 499.5L86.1 501.2L84.3 505.6L86.9 512.5L92.2 518.6L93.9 526.4L93 536.8L93.5 545.5" stroke="#13315c" stroke-width="1"/>
<path d="M133.8 500.3L129.5 501.2L126.9 504.7L130.3 508.2L127.7 512.5L125.1 516.8" stroke="#13315c" stroke-width="1"/>
<path d="M122.5 534.2L121.7 536.8L117.3 538.5L114.7 542.9L111.3 545.1L108.6 542.9L108.6 545.5" stroke="#13315c" stroke-width="1"/>
<path d="M152 450.5H243.5M243.5 449.5H268" stroke="#5e3c14" shape-rendering="crispEdges"/>
<path d="M45.5 304V322M44.5 322V375M43.5 375V428M42.5 428V480M41.5 480V486" stroke="#6e4510"/>
<path d="M29 486.5H66M66 487.5H81M80.5 487V480M81.5 480V462M81 462.5H156.4" stroke="#6e4510"/>
<path d="M156.4 462.5L158.1 462.5L165.1 464.8L169.4 469.1L172 476L176.4 481.3L180 482.6" stroke="#6e4510"/>
<path d="M152 450.9L154.7 452.6L155 458.7L157.3 461.8" stroke="#6e4510"/>
<path d="M51.4 486.3L50.6 490.5L48.9 494.6L52.2 496.2L53.4 493.3L53.9 504.5L55.5 517.7L55.5 525.1L58.8 530.9L60.5 540.8L61 545.7" stroke="#6e4510"/>
<path d="M170 473.4L172.9 478.2L177.6 482L183.4 483.5L189.1 488.7L194.8 495.3L200.5 499.2L204.4 503L206.3 506.8L212 511.6L217.7 515.4L221.5 515.4L227.3 519.2L231.1 522.1L235.8 527.8L237.7 534.5L241.6 541.1L244.4 545" stroke="#9c5f10" stroke-width="1.2"/>
<path d="M260 409.5h2v7h-2z" stroke="#b4b4b4" stroke-width="1.1"/>
<path d="M115.6 476.9L119.1 477.8L119.9 480.9L123.4 481.3L123.1 483.9L117.3 484.4L114.7 487.3L112.6 485.6L113 482.1L115.6 481.3Z" stroke="#b4b4b4" stroke-width="1.1"/>
<path d="M131.7 489.9L135.6 487.3L138.2 489.1L140.8 488.2L143.4 493.4L146 497.7L148.6 501.2L149.4 507.3L152.1 510.8L156.4 513.4L157.3 516.8L153.8 519.4L150.3 516L148.6 509.9L144.3 509.9L143.4 516L143.9 520.3L139.9 522.9L136.4 521.2L138.2 516L139.9 510.8L137.3 505.6L135.6 498.6L134.7 493.4Z" stroke="#b4b4b4" stroke-width="1.1"/>
<path d="M139.5 497.5h2.5v2.5h-2.5z" stroke="#b4b4b4" stroke-width="1.1"/>
<path d="M142.5 504.5h2.5v2.5h-2.5z" stroke="#b4b4b4" stroke-width="1.1"/>
<path d="M124.4 517.7L125.6 518.5L124.4 529.9L123.5 533.3L120.9 533.3L121.4 529.9Z" stroke="#b4b4b4" stroke-width="1.1"/>
<path d="M129.5 377h2.5v4h-0.5v4h0.5v3h-2.5v-4h-0.5v-4h0.5z" fill="#b0b0b0" stroke="none"/>
<path d="M123.7 390h2.3v6h-0.5v6.5h-2.3v-6h0.5z" fill="#b0b0b0" stroke="none"/>
</g>
<path d="M33 340h1v1h-1zM33 395h1v1h-1zM33 450h1v1h-1zM33 504h1v1h-1zM38 340h1v1h-1zM38 395h1v1h-1zM38 450h1v1h-1zM38 504h1v1h-1zM42 340h1v1h-1zM42 395h1v1h-1zM42 450h1v1h-1zM42 504h1v1h-1zM44 475h1v1h-1zM44 481h1v1h-1zM44 486h1v1h-1zM44 491h1v1h-1zM44 497h1v1h-1zM44 502h1v1h-1zM44 508h1v1h-1zM44 513h1v1h-1zM44 518h1v1h-1zM44 524h1v1h-1zM44 529h1v1h-1zM44 535h1v1h-1zM44 540h1v1h-1zM45 405h1v1h-1zM45 410h1v1h-1zM45 416h1v1h-1zM45 421h1v1h-1zM45 427h1v1h-1zM45 432h1v1h-1zM45 437h1v1h-1zM45 443h1v1h-1zM45 448h1v1h-1zM45 454h1v1h-1zM45 459h1v1h-1zM45 464h1v1h-1zM45 470h1v1h-1zM46 335h1v1h-1zM46 340h1v1h-1zM46 346h1v1h-1zM46 351h1v1h-1zM46 356h1v1h-1zM46 362h1v1h-1zM46 367h1v1h-1zM46 373h1v1h-1zM46 378h1v1h-1zM46 383h1v1h-1zM46 389h1v1h-1zM46 394h1v1h-1zM46 400h1v1h-1zM47 308h1v1h-1zM47 313h1v1h-1zM47 319h1v1h-1zM47 324h1v1h-1zM47 329h1v1h-1zM47 340h1v1h-1zM47 395h1v1h-1zM47 450h1v1h-1zM47 504h1v1h-1zM51 340h1v1h-1zM51 395h1v1h-1zM51 450h1v1h-1zM51 504h1v1h-1zM56 341h1v1h-1zM56 396h1v1h-1zM56 450h1v1h-1zM56 504h1v1h-1zM60 341h1v1h-1zM60 396h1v1h-1zM60 450h1v1h-1zM60 504h1v1h-1zM65 341h1v1h-1zM65 396h1v1h-1zM65 450h1v1h-1zM65 504h1v1h-1zM69 341h1v1h-1zM69 396h1v1h-1zM69 450h1v1h-1zM69 504h1v1h-1zM74 341h1v1h-1zM74 396h1v1h-1zM74 450h1v1h-1zM74 504h1v1h-1zM78 341h1v1h-1zM78 396h1v1h-1zM78 450h1v1h-1zM78 505h1v1h-1zM83 341h1v1h-1zM83 396h1v1h-1zM83 450h1v1h-1zM83 505h1v1h-1zM87 341h1v1h-1zM87 396h1v1h-1zM87 451h1v1h-1zM87 505h1v1h-1zM90 508h1v1h-1zM90 513h1v1h-1zM90 518h1v1h-1zM90 524h1v1h-1zM90 529h1v1h-1zM90 535h1v1h-1zM90 540h1v1h-1zM91 362h1v1h-1zM91 367h1v1h-1zM91 373h1v1h-1zM91 378h1v1h-1zM91 383h1v1h-1zM91 389h1v1h-1zM91 394h1v1h-1zM91 400h1v1h-1zM91 405h1v1h-1zM91 410h1v1h-1zM91 416h1v1h-1zM91 421h1v1h-1zM91 427h1v1h-1zM91 432h1v1h-1zM91 437h1v1h-1zM91 443h1v1h-1zM91 448h1v1h-1zM91 454h1v1h-1zM91 459h1v1h-1zM91 464h1v1h-1zM91 470h1v1h-1zM91 475h1v1h-1zM91 481h1v1h-1zM91 486h1v1h-1zM91 491h1v1h-1zM91 497h1v1h-1zM91 502h1v1h-1zM92 308h1v1h-1zM92 313h1v1h-1zM92 319h1v1h-1zM92 324h1v1h-1zM92 329h1v1h-1zM92 335h1v1h-1zM92 340h1v1h-1zM92 341h1v1h-1zM92 346h1v1h-1zM92 351h1v1h-1zM92 356h1v1h-1zM92 396h1v1h-1zM92 451h1v1h-1zM92 505h1v1h-1zM96 341h1v1h-1zM96 396h1v1h-1zM96 451h1v1h-1zM96 505h1v1h-1zM101 341h1v1h-1zM101 396h1v1h-1zM101 451h1v1h-1zM101 505h1v1h-1zM105 341h1v1h-1zM105 396h1v1h-1zM105 451h1v1h-1zM105 505h1v1h-1zM110 341h1v1h-1zM110 396h1v1h-1zM110 451h1v1h-1zM110 505h1v1h-1zM114 341h1v1h-1zM114 396h1v1h-1zM114 451h1v1h-1zM114 505h1v1h-1zM119 341h1v1h-1zM119 396h1v1h-1zM119 451h1v1h-1zM119 505h1v1h-1zM123 341h1v1h-1zM123 396h1v1h-1zM123 451h1v1h-1zM123 505h1v1h-1zM128 341h1v1h-1zM128 396h1v1h-1zM128 451h1v1h-1zM128 505h1v1h-1zM132 341h1v1h-1zM132 396h1v1h-1zM132 451h1v1h-1zM132 505h1v1h-1zM137 308h1v1h-1zM137 313h1v1h-1zM137 319h1v1h-1zM137 324h1v1h-1zM137 329h1v1h-1zM137 335h1v1h-1zM137 340h1v1h-1zM137 341h1v1h-1zM137 346h1v1h-1zM137 351h1v1h-1zM137 356h1v1h-1zM137 362h1v1h-1zM137 367h1v1h-1zM137 373h1v1h-1zM137 378h1v1h-1zM137 383h1v1h-1zM137 389h1v1h-1zM137 394h1v1h-1zM137 396h1v1h-1zM137 400h1v1h-1zM137 405h1v1h-1zM137 410h1v1h-1zM137 416h1v1h-1zM137 421h1v1h-1zM137 427h1v1h-1zM137 432h1v1h-1zM137 437h1v1h-1zM137 443h1v1h-1zM137 448h1v1h-1zM137 451h1v1h-1zM137 454h1v1h-1zM137 459h1v1h-1zM137 464h1v1h-1zM137 470h1v1h-1zM137 475h1v1h-1zM137 481h1v1h-1zM137 486h1v1h-1zM137 491h1v1h-1zM137 497h1v1h-1zM137 502h1v1h-1zM137 505h1v1h-1zM137 508h1v1h-1zM137 513h1v1h-1zM137 518h1v1h-1zM137 524h1v1h-1zM137 529h1v1h-1zM137 535h1v1h-1zM137 540h1v1h-1zM141 341h1v1h-1zM141 396h1v1h-1zM141 451h1v1h-1zM141 505h1v1h-1zM146 341h1v1h-1zM146 396h1v1h-1zM146 451h1v1h-1zM146 505h1v1h-1zM150 341h1v1h-1zM150 396h1v1h-1zM150 451h1v1h-1zM150 505h1v1h-1zM155 341h1v1h-1zM155 396h1v1h-1zM155 451h1v1h-1zM155 505h1v1h-1zM159 341h1v1h-1zM159 396h1v1h-1zM159 451h1v1h-1zM159 505h1v1h-1zM164 341h1v1h-1zM164 396h1v1h-1zM164 451h1v1h-1zM164 505h1v1h-1zM168 341h1v1h-1zM168 396h1v1h-1zM168 451h1v1h-1zM168 505h1v1h-1zM173 341h1v1h-1zM173 396h1v1h-1zM173 451h1v1h-1zM173 505h1v1h-1zM177 341h1v1h-1zM177 396h1v1h-1zM177 451h1v1h-1zM177 505h1v1h-1zM182 308h1v1h-1zM182 313h1v1h-1zM182 319h1v1h-1zM182 324h1v1h-1zM182 329h1v1h-1zM182 335h1v1h-1zM182 340h1v1h-1zM182 341h1v1h-1zM182 346h1v1h-1zM182 351h1v1h-1zM182 356h1v1h-1zM182 362h1v1h-1zM182 367h1v1h-1zM182 373h1v1h-1zM182 378h1v1h-1zM182 383h1v1h-1zM182 389h1v1h-1zM182 396h1v1h-1zM182 451h1v1h-1zM182 505h1v1h-1zM183 394h1v1h-1zM183 400h1v1h-1zM183 405h1v1h-1zM183 410h1v1h-1zM183 416h1v1h-1zM183 421h1v1h-1zM183 427h1v1h-1zM183 432h1v1h-1zM183 437h1v1h-1zM183 443h1v1h-1zM183 448h1v1h-1zM183 454h1v1h-1zM183 459h1v1h-1zM183 464h1v1h-1zM183 470h1v1h-1zM183 475h1v1h-1zM183 481h1v1h-1zM183 486h1v1h-1zM183 491h1v1h-1zM183 497h1v1h-1zM183 502h1v1h-1zM183 508h1v1h-1zM183 513h1v1h-1zM183 518h1v1h-1zM183 524h1v1h-1zM183 529h1v1h-1zM184 535h1v1h-1zM184 540h1v1h-1zM186 341h1v1h-1zM186 396h1v1h-1zM186 451h1v1h-1zM186 505h1v1h-1zM191 341h1v1h-1zM191 396h1v1h-1zM191 451h1v1h-1zM191 505h1v1h-1zM195 341h1v1h-1zM195 396h1v1h-1zM195 450h1v1h-1zM195 505h1v1h-1zM200 341h1v1h-1zM200 396h1v1h-1zM200 450h1v1h-1zM200 504h1v1h-1zM204 341h1v1h-1zM204 396h1v1h-1zM204 450h1v1h-1zM204 504h1v1h-1zM209 341h1v1h-1zM209 396h1v1h-1zM209 450h1v1h-1zM209 504h1v1h-1zM213 341h1v1h-1zM213 396h1v1h-1zM213 450h1v1h-1zM213 504h1v1h-1zM218 341h1v1h-1zM218 396h1v1h-1zM218 450h1v1h-1zM218 504h1v1h-1zM222 340h1v1h-1zM222 395h1v1h-1zM222 450h1v1h-1zM222 504h1v1h-1zM227 308h1v1h-1zM227 313h1v1h-1zM227 319h1v1h-1zM227 324h1v1h-1zM227 329h1v1h-1zM227 335h1v1h-1zM227 340h1v1h-1zM227 346h1v1h-1zM227 395h1v1h-1zM227 450h1v1h-1zM227 504h1v1h-1zM228 351h1v1h-1zM228 356h1v1h-1zM228 362h1v1h-1zM228 367h1v1h-1zM228 373h1v1h-1zM228 378h1v1h-1zM228 383h1v1h-1zM228 389h1v1h-1zM228 394h1v1h-1zM228 400h1v1h-1zM228 405h1v1h-1zM228 410h1v1h-1zM228 416h1v1h-1zM229 421h1v1h-1zM229 427h1v1h-1zM229 432h1v1h-1zM229 437h1v1h-1zM229 443h1v1h-1zM229 448h1v1h-1zM229 454h1v1h-1zM229 459h1v1h-1zM229 464h1v1h-1zM229 470h1v1h-1zM229 475h1v1h-1zM229 481h1v1h-1zM229 486h1v1h-1zM230 491h1v1h-1zM230 497h1v1h-1zM230 502h1v1h-1zM230 508h1v1h-1zM230 513h1v1h-1zM230 518h1v1h-1zM230 524h1v1h-1zM230 529h1v1h-1zM230 535h1v1h-1zM230 540h1v1h-1zM231 340h1v1h-1zM231 395h1v1h-1zM231 450h1v1h-1zM231 504h1v1h-1zM236 340h1v1h-1zM236 395h1v1h-1zM236 450h1v1h-1zM236 504h1v1h-1zM240 340h1v1h-1zM240 395h1v1h-1zM240 450h1v1h-1zM240 504h1v1h-1zM245 340h1v1h-1zM245 395h1v1h-1zM245 450h1v1h-1zM245 504h1v1h-1zM249 340h1v1h-1zM249 395h1v1h-1zM249 449h1v1h-1zM249 504h1v1h-1zM254 340h1v1h-1zM254 395h1v1h-1zM254 449h1v1h-1zM254 503h1v1h-1zM258 340h1v1h-1zM258 395h1v1h-1zM258 449h1v1h-1zM258 503h1v1h-1zM263 340h1v1h-1zM263 395h1v1h-1zM263 449h1v1h-1zM263 503h1v1h-1z" fill="#7e8a70" shape-rendering="crispEdges"/>
<rect x="29" y="304" width="240" height="1" fill="#333333"/>
<rect x="29" y="546" width="240" height="1" fill="#333333"/>
<rect x="29" y="304" width="1" height="243" fill="#333333"/>
<rect x="268" y="304" width="1" height="243" fill="#333333"/>
<text x="43.5" y="556" font-size="10" fill="#b4b4b4" textLength="21.2" lengthAdjust="spacingAndGlyphs" text-anchor="middle" >-109</text>
<text x="89.5" y="556" font-size="10" fill="#b4b4b4" textLength="21.2" lengthAdjust="spacingAndGlyphs" text-anchor="middle" >-108</text>
<text x="135.5" y="556" font-size="10" fill="#b4b4b4" textLength="21.2" lengthAdjust="spacingAndGlyphs" text-anchor="middle" >-107</text>
<text x="182.5" y="556" font-size="10" fill="#b4b4b4" textLength="21.2" lengthAdjust="spacingAndGlyphs" text-anchor="middle" >-106</text>
<text x="228.5" y="556" font-size="10" fill="#b4b4b4" textLength="21.2" lengthAdjust="spacingAndGlyphs" text-anchor="middle" >-105</text>
<text x="28" y="341.7" font-size="10" fill="#b4b4b4" textLength="10.6" lengthAdjust="spacingAndGlyphs" text-anchor="middle" transform="rotate(-90 28 341.7)" >34</text>
<text x="28" y="396.7" font-size="10" fill="#b4b4b4" textLength="10.6" lengthAdjust="spacingAndGlyphs" text-anchor="middle" transform="rotate(-90 28 396.7)" >33</text>
<text x="28" y="451.7" font-size="10" fill="#b4b4b4" textLength="10.6" lengthAdjust="spacingAndGlyphs" text-anchor="middle" transform="rotate(-90 28 451.7)" >32</text>
<text x="28" y="505.7" font-size="10" fill="#b4b4b4" textLength="10.6" lengthAdjust="spacingAndGlyphs" text-anchor="middle" transform="rotate(-90 28 505.7)" >31</text>
<text x="15.8" y="427" font-size="13" fill="#d8d8d8" textLength="98.0" lengthAdjust="spacingAndGlyphs" text-anchor="middle" transform="rotate(-90 15.8 427)" >Latitude [deg]</text>
<text x="148" y="568.5" font-size="13" fill="#e6e6e6" textLength="105.0" lengthAdjust="spacingAndGlyphs" text-anchor="middle" >Longitude [deg]</text>
<g fill="none" stroke="#ff8844" stroke-width="1" shape-rendering="crispEdges">
<path d="M189.8 397.4L138.5 438.5"/>
<path d="M138.5 438.5L147 429.5"/>
<path d="M138.5 438.5L146 435.8"/>
</g>
<path d="M145 435h7v1h-7zM148 432h1v7h-1z" fill="#00e0e0" shape-rendering="crispEdges"/>
<path d="M201 401h7v1h-7zM204 398h1v7h-1z" fill="#ffff33" shape-rendering="crispEdges"/>
<text x="148" y="428" font-size="9" fill="#a0a0a0" textLength="9.2" lengthAdjust="spacingAndGlyphs" text-anchor="middle" >05</text>
<text x="204" y="394" font-size="9" fill="#a0a0a0" textLength="9.2" lengthAdjust="spacingAndGlyphs" text-anchor="middle" >06</text>
<text x="4" y="571.5" font-size="6" fill="#202020" textLength="11.4" lengthAdjust="spacingAndGlyphs" >rjw</text>
</g>
<g id="orbit">
<clipPath id="oc"><rect x="280" y="304" width="264" height="253"/></clipPath>
<g clip-path="url(#oc)" fill="none" stroke-width="1">
<g stroke="#8a8a48" shape-rendering="crispEdges">
<circle cx="407.6" cy="441.3" r="138.4"/>
<circle cx="411.6" cy="437.3" r="40.4"/>
<circle cx="414.9" cy="438.2" r="26.8"/>
<circle cx="414.2" cy="438.4" r="18.6"/>
<circle cx="413.3" cy="438.4" r="9.3"/>
</g>
<ellipse cx="434.2" cy="417.9" rx="31.4" ry="15.3" transform="rotate(-49.9 434.2 417.9)" stroke="#44a4a4" stroke-width="1.15"/>
<ellipse cx="436.8" cy="414.2" rx="35.9" ry="16" transform="rotate(-49.9 436.8 414.2)" stroke="#a020f0" stroke-width="1.25"/>
</g>
<circle cx="445.6" cy="308.3" r="2.6" fill="#80806a"/>
<circle cx="407.4" cy="397.4" r="2.6" fill="#80806a"/>
<circle cx="432.5" cy="432.3" r="2.6" fill="#80806a"/>
<circle cx="409.7" cy="432" r="2.6" fill="#80806a"/>
<circle cx="417.4" cy="413.5" r="2.8" fill="#1060ff"/>
<circle cx="414.7" cy="438.3" r="3.4" fill="#ffff20"/>
<rect x="280" y="304" width="264" height="1" fill="#333333"/>
<rect x="280" y="556" width="264" height="1" fill="#333333"/>
<rect x="280" y="304" width="1" height="253" fill="#333333"/>
<rect x="543" y="304" width="1" height="253" fill="#333333"/>
<text x="542.5" y="316" font-size="14" fill="#e6e6e6" textLength="64.0" lengthAdjust="spacingAndGlyphs" text-anchor="end" >T_j 4.63</text>
<text x="414" y="570" font-size="13" fill="#e6e6e6" textLength="147.0" lengthAdjust="spacingAndGlyphs" text-anchor="middle" >Orbital Position [AU]</text>
</g>
<g id="horz">
<rect x="586" y="311" width="435" height="1" fill="#282828"/>
<rect x="586" y="320" width="435" height="1" fill="#282828"/>
<rect x="586" y="330" width="435" height="1" fill="#282828"/>
<rect x="586" y="339" width="435" height="1" fill="#282828"/>
<rect x="586" y="357" width="435" height="1" fill="#282828"/>
<rect x="586" y="366" width="435" height="1" fill="#282828"/>
<rect x="586" y="376" width="435" height="1" fill="#282828"/>
<rect x="586" y="385" width="435" height="1" fill="#282828"/>
<rect x="586" y="394" width="435" height="1" fill="#282828"/>
<rect x="600" y="303" width="1" height="101" fill="#282828"/>
<rect x="641" y="303" width="1" height="101" fill="#282828"/>
<rect x="681" y="303" width="1" height="101" fill="#282828"/>
<rect x="722" y="303" width="1" height="101" fill="#282828"/>
<rect x="762" y="303" width="1" height="101" fill="#282828"/>
<rect x="803" y="303" width="1" height="101" fill="#282828"/>
<rect x="843" y="303" width="1" height="101" fill="#282828"/>
<rect x="883" y="303" width="1" height="101" fill="#282828"/>
<rect x="924" y="303" width="1" height="101" fill="#282828"/>
<rect x="964" y="303" width="1" height="101" fill="#282828"/>
<rect x="1005" y="303" width="1" height="101" fill="#282828"/>
<rect x="586" y="303" width="435" height="1" fill="#282828"/>
<rect x="586" y="403" width="435" height="1" fill="#282828"/>
<rect x="586" y="303" width="1" height="101" fill="#282828"/>
<rect x="1020" y="303" width="1" height="101" fill="#282828"/>
<rect x="600" y="403" width="1" height="5" fill="#282828"/>
<rect x="641" y="403" width="1" height="5" fill="#282828"/>
<rect x="681" y="403" width="1" height="5" fill="#282828"/>
<rect x="722" y="403" width="1" height="5" fill="#282828"/>
<rect x="762" y="403" width="1" height="5" fill="#282828"/>
<rect x="803" y="403" width="1" height="5" fill="#282828"/>
<rect x="843" y="403" width="1" height="5" fill="#282828"/>
<rect x="883" y="403" width="1" height="5" fill="#282828"/>
<rect x="924" y="403" width="1" height="5" fill="#282828"/>
<rect x="964" y="403" width="1" height="5" fill="#282828"/>
<rect x="1005" y="403" width="1" height="5" fill="#282828"/>
<rect x="582" y="311" width="5" height="1" fill="#282828"/>
<rect x="582" y="348" width="5" height="1" fill="#282828"/>
<rect x="582" y="385" width="5" height="1" fill="#282828"/>
<rect x="586" y="348" width="435" height="1" fill="#e8e8e8"/>
<path d="M600 333h1V348h-1zM606 339h1V348h-1zM612 348h1V357h-1zM616 327h1V348h-1zM623 348h1V371h-1zM629 343h1V348h-1zM636 348h1V382h-1zM662 348h1V362h-1zM666 348h1V371h-1zM690 310h1V348h-1zM692 348h1V363h-1zM696 348h1V380h-1zM706 348h1V400h-1zM708 348h1V398h-1zM712 348h1V377h-1zM724 333h1V348h-1zM727 334h1V348h-1zM731 348h1V365h-1zM736 320h1V348h-1zM740 329h1V348h-1zM743 329h1V348h-1zM746 335h1V348h-1zM750 330h1V348h-1zM752 345h1V348h-1zM757 307h1V348h-1zM759 343h1V348h-1zM764 310h1V348h-1zM766 344h1V348h-1zM770 337h1V348h-1zM774 336h1V348h-1zM777 322h1V348h-1zM780 339h1V348h-1zM784 338h1V348h-1zM788 348h1V349h-1zM791 348h1V354h-1zM795 348h1V369h-1zM800 317h1V348h-1zM802 348h1V360h-1zM808 323h1V348h-1zM810 348h1V369h-1zM812 336h1V348h-1zM816 348h1V362h-1zM820 343h1V348h-1zM823 345h1V348h-1zM826 323h1V348h-1zM829 348h1V378h-1zM834 326h1V348h-1zM837 329h1V348h-1zM841 348h1V388h-1zM844 334h1V348h-1zM847 338h1V348h-1zM850 320h1V348h-1zM853 344h1V348h-1zM862 329h1V348h-1zM866 348h1V391h-1zM868 344h1V348h-1zM873 348h1V365h-1zM876 311h1V348h-1zM879 348h1V365h-1zM883 348h1V368h-1zM885 321h1V348h-1zM891 340h1V348h-1zM893 348h1V394h-1zM896 345h1V348h-1zM901 348h1V363h-1zM904 317h1V348h-1zM907 348h1V371h-1zM907 348h1V376h-1zM915 337h1V348h-1zM916 340h1V348h-1zM921 347h1V348h-1zM922 341h1V348h-1zM928 346h1V348h-1zM928 348h1V352h-1zM933 348h1V375h-1zM936 327h1V348h-1zM939 348h1V380h-1zM945 348h1V399h-1zM948 334h1V348h-1zM955 346h1V348h-1zM964 335h1V348h-1zM965 328h1V348h-1z" fill="#8c8c14" shape-rendering="crispEdges"/>
<path d="M721 348h1V359h-1zM733 348h1V351h-1zM736 343h1V348h-1zM740 348h1V359h-1zM742 327h1V348h-1zM745 333h1V348h-1zM753 348h1V348h-1zM761 348h1V361h-1zM764 346h1V348h-1zM768 348h1V357h-1zM771 348h1V357h-1zM775 348h1V369h-1zM780 348h1V349h-1zM781 348h1V367h-1zM785 333h1V348h-1zM788 316h1V348h-1zM792 348h1V364h-1zM794 327h1V348h-1zM799 348h1V379h-1zM801 348h1V362h-1zM805 322h1V348h-1zM809 348h1V368h-1zM814 346h1V348h-1zM816 336h1V348h-1zM820 348h1V364h-1zM827 330h1V348h-1zM830 335h1V348h-1zM837 325h1V348h-1zM839 348h1V378h-1zM844 348h1V367h-1zM846 321h1V348h-1zM851 348h1V359h-1zM856 330h1V348h-1zM861 315h1V348h-1zM864 348h1V364h-1zM867 348h1V353h-1zM871 343h1V348h-1zM874 322h1V348h-1zM878 348h1V370h-1zM882 348h1V362h-1zM884 348h1V352h-1zM889 344h1V348h-1zM892 348h1V359h-1zM895 348h1V360h-1zM899 348h1V389h-1zM903 348h1V363h-1zM907 348h1V364h-1zM909 346h1V348h-1zM912 343h1V348h-1zM916 348h1V372h-1zM920 348h1V364h-1zM923 348h1V355h-1zM926 348h1V355h-1zM930 348h1V357h-1zM935 346h1V348h-1zM937 336h1V348h-1zM942 340h1V348h-1zM944 323h1V348h-1zM948 348h1V350h-1zM952 348h1V355h-1zM954 348h1V352h-1zM958 348h1V349h-1zM961 344h1V348h-1zM964 333h1V348h-1zM969 346h1V348h-1zM972 341h1V348h-1zM974 348h1V350h-1zM977 347h1V348h-1zM981 348h1V359h-1zM984 346h1V348h-1zM988 345h1V348h-1zM991 335h1V348h-1zM992 348h1V355h-1zM996 345h1V348h-1zM999 336h1V348h-1zM1005 348h1V348h-1z" fill="#0a7c7c" shape-rendering="crispEdges"/>
<path d="M719 357h5v5h-5zM731 349h5v5h-5zM734 341h5v5h-5zM738 357h5v5h-5zM740 325h5v5h-5zM743 331h5v5h-5zM751 346h5v5h-5zM759 359h5v5h-5zM762 344h5v5h-5zM766 355h5v5h-5zM769 355h5v5h-5zM773 367h5v5h-5zM778 347h5v5h-5zM779 365h5v5h-5zM783 331h5v5h-5zM786 314h5v5h-5zM790 362h5v5h-5zM792 325h5v5h-5zM797 377h5v5h-5zM799 360h5v5h-5zM803 320h5v5h-5zM807 366h5v5h-5zM812 344h5v5h-5zM814 334h5v5h-5zM818 362h5v5h-5zM825 328h5v5h-5zM828 333h5v5h-5zM835 323h5v5h-5zM837 376h5v5h-5zM842 365h5v5h-5zM844 319h5v5h-5zM849 357h5v5h-5zM854 328h5v5h-5zM859 313h5v5h-5zM862 362h5v5h-5zM865 351h5v5h-5zM869 341h5v5h-5zM872 320h5v5h-5zM876 368h5v5h-5zM880 360h5v5h-5zM882 350h5v5h-5zM887 342h5v5h-5zM890 357h5v5h-5zM893 358h5v5h-5zM897 387h5v5h-5zM901 361h5v5h-5zM905 362h5v5h-5zM907 344h5v5h-5zM910 341h5v5h-5zM914 370h5v5h-5zM918 362h5v5h-5zM921 353h5v5h-5zM924 353h5v5h-5zM928 355h5v5h-5zM933 344h5v5h-5zM935 334h5v5h-5zM940 338h5v5h-5zM942 321h5v5h-5zM946 348h5v5h-5zM950 353h5v5h-5zM952 350h5v5h-5zM956 347h5v5h-5zM959 342h5v5h-5zM962 331h5v5h-5zM967 344h5v5h-5zM970 339h5v5h-5zM972 348h5v5h-5zM975 345h5v5h-5zM979 357h5v5h-5zM982 344h5v5h-5zM986 343h5v5h-5zM989 333h5v5h-5zM990 353h5v5h-5zM994 343h5v5h-5zM997 334h5v5h-5zM1003 346h5v5h-5z" fill="#00dddd" shape-rendering="crispEdges"/>
<path d="M598 331h5v5h-5zM604 337h5v5h-5zM610 355h5v5h-5zM614 325h5v5h-5zM621 369h5v5h-5zM627 341h5v5h-5zM634 380h5v5h-5zM660 360h5v5h-5zM664 369h5v5h-5zM688 308h5v5h-5zM690 361h5v5h-5zM694 378h5v5h-5zM704 398h5v5h-5zM706 396h5v5h-5zM710 375h5v5h-5zM722 331h5v5h-5zM725 332h5v5h-5zM729 363h5v5h-5zM734 318h5v5h-5zM738 327h5v5h-5zM741 327h5v5h-5zM744 333h5v5h-5zM748 328h5v5h-5zM750 343h5v5h-5zM755 305h5v5h-5zM757 341h5v5h-5zM762 308h5v5h-5zM764 342h5v5h-5zM768 335h5v5h-5zM772 334h5v5h-5zM775 320h5v5h-5zM778 337h5v5h-5zM782 336h5v5h-5zM786 347h5v5h-5zM789 352h5v5h-5zM793 367h5v5h-5zM798 315h5v5h-5zM800 358h5v5h-5zM806 321h5v5h-5zM808 367h5v5h-5zM810 334h5v5h-5zM814 360h5v5h-5zM818 341h5v5h-5zM821 343h5v5h-5zM824 321h5v5h-5zM827 376h5v5h-5zM832 324h5v5h-5zM835 327h5v5h-5zM839 386h5v5h-5zM842 332h5v5h-5zM845 336h5v5h-5zM848 318h5v5h-5zM851 342h5v5h-5zM860 327h5v5h-5zM864 389h5v5h-5zM866 342h5v5h-5zM871 363h5v5h-5zM874 309h5v5h-5zM877 363h5v5h-5zM881 366h5v5h-5zM883 319h5v5h-5zM889 338h5v5h-5zM891 392h5v5h-5zM894 343h5v5h-5zM899 361h5v5h-5zM902 315h5v5h-5zM905 369h5v5h-5zM905 374h5v5h-5zM913 335h5v5h-5zM914 338h5v5h-5zM919 345h5v5h-5zM920 339h5v5h-5zM926 344h5v5h-5zM926 350h5v5h-5zM931 373h5v5h-5zM934 325h5v5h-5zM937 378h5v5h-5zM943 397h5v5h-5zM946 332h5v5h-5zM953 344h5v5h-5zM962 333h5v5h-5zM963 326h5v5h-5z" fill="#ffff33" shape-rendering="crispEdges"/>
<text x="600.5" y="418.1" font-size="10" fill="#b4b4b4" textLength="10.6" lengthAdjust="spacingAndGlyphs" text-anchor="middle" >-0</text>
<text x="641.5" y="418.1" font-size="10" fill="#b4b4b4" textLength="10.6" lengthAdjust="spacingAndGlyphs" text-anchor="middle" >14</text>
<text x="681.5" y="418.1" font-size="10" fill="#b4b4b4" textLength="10.6" lengthAdjust="spacingAndGlyphs" text-anchor="middle" >27</text>
<text x="722.5" y="418.1" font-size="10" fill="#b4b4b4" textLength="10.6" lengthAdjust="spacingAndGlyphs" text-anchor="middle" >41</text>
<text x="762.5" y="418.1" font-size="10" fill="#b4b4b4" textLength="10.6" lengthAdjust="spacingAndGlyphs" text-anchor="middle" >54</text>
<text x="803.5" y="418.1" font-size="10" fill="#b4b4b4" textLength="10.6" lengthAdjust="spacingAndGlyphs" text-anchor="middle" >68</text>
<text x="843.5" y="418.1" font-size="10" fill="#b4b4b4" textLength="10.6" lengthAdjust="spacingAndGlyphs" text-anchor="middle" >82</text>
<text x="883.5" y="418.1" font-size="10" fill="#b4b4b4" textLength="10.6" lengthAdjust="spacingAndGlyphs" text-anchor="middle" >95</text>
<text x="924.5" y="418.1" font-size="10" fill="#b4b4b4" textLength="15.9" lengthAdjust="spacingAndGlyphs" text-anchor="middle" >109</text>
<text x="964.5" y="418.1" font-size="10" fill="#b4b4b4" textLength="15.9" lengthAdjust="spacingAndGlyphs" text-anchor="middle" >122</text>
<text x="1005.5" y="418.1" font-size="10" fill="#b4b4b4" textLength="15.9" lengthAdjust="spacingAndGlyphs" text-anchor="middle" >136</text>
<text x="580.5" y="311.7" font-size="10" fill="#b4b4b4" textLength="21.2" lengthAdjust="spacingAndGlyphs" text-anchor="middle" transform="rotate(-90 580.5 311.7)" >0.32</text>
<text x="580.5" y="348.7" font-size="10" fill="#b4b4b4" textLength="21.2" lengthAdjust="spacingAndGlyphs" text-anchor="middle" transform="rotate(-90 580.5 348.7)" >0.00</text>
<text x="580.5" y="385.7" font-size="10" fill="#b4b4b4" textLength="26.5" lengthAdjust="spacingAndGlyphs" text-anchor="middle" transform="rotate(-90 580.5 385.7)" >-0.32</text>
<text x="567.7" y="353.0" font-size="13" fill="#d8d8d8" textLength="91.0" lengthAdjust="spacingAndGlyphs" text-anchor="middle" transform="rotate(-90 567.7 353.0)" >Horz Res [km]</text>
<text x="803" y="430.6" font-size="13" fill="#e6e6e6" textLength="161.0" lengthAdjust="spacingAndGlyphs" text-anchor="middle" >Length Along Trail [km]</text>
</g>
<g id="vert">
<rect x="586" y="449" width="435" height="1" fill="#282828"/>
<rect x="586" y="458" width="435" height="1" fill="#282828"/>
<rect x="586" y="468" width="435" height="1" fill="#282828"/>
<rect x="586" y="477" width="435" height="1" fill="#282828"/>
<rect x="586" y="495" width="435" height="1" fill="#282828"/>
<rect x="586" y="504" width="435" height="1" fill="#282828"/>
<rect x="586" y="514" width="435" height="1" fill="#282828"/>
<rect x="586" y="523" width="435" height="1" fill="#282828"/>
<rect x="586" y="532" width="435" height="1" fill="#282828"/>
<rect x="600" y="441" width="1" height="101" fill="#282828"/>
<rect x="641" y="441" width="1" height="101" fill="#282828"/>
<rect x="681" y="441" width="1" height="101" fill="#282828"/>
<rect x="722" y="441" width="1" height="101" fill="#282828"/>
<rect x="762" y="441" width="1" height="101" fill="#282828"/>
<rect x="803" y="441" width="1" height="101" fill="#282828"/>
<rect x="843" y="441" width="1" height="101" fill="#282828"/>
<rect x="883" y="441" width="1" height="101" fill="#282828"/>
<rect x="924" y="441" width="1" height="101" fill="#282828"/>
<rect x="964" y="441" width="1" height="101" fill="#282828"/>
<rect x="1005" y="441" width="1" height="101" fill="#282828"/>
<rect x="586" y="441" width="435" height="1" fill="#282828"/>
<rect x="586" y="541" width="435" height="1" fill="#282828"/>
<rect x="586" y="441" width="1" height="101" fill="#282828"/>
<rect x="1020" y="441" width="1" height="101" fill="#282828"/>
<rect x="600" y="541" width="1" height="5" fill="#282828"/>
<rect x="641" y="541" width="1" height="5" fill="#282828"/>
<rect x="681" y="541" width="1" height="5" fill="#282828"/>
<rect x="722" y="541" width="1" height="5" fill="#282828"/>
<rect x="762" y="541" width="1" height="5" fill="#282828"/>
<rect x="803" y="541" width="1" height="5" fill="#282828"/>
<rect x="843" y="541" width="1" height="5" fill="#282828"/>
<rect x="883" y="541" width="1" height="5" fill="#282828"/>
<rect x="924" y="541" width="1" height="5" fill="#282828"/>
<rect x="964" y="541" width="1" height="5" fill="#282828"/>
<rect x="1005" y="541" width="1" height="5" fill="#282828"/>
<rect x="582" y="449" width="5" height="1" fill="#282828"/>
<rect x="582" y="486" width="5" height="1" fill="#282828"/>
<rect x="582" y="523" width="5" height="1" fill="#282828"/>
<rect x="586" y="486" width="435" height="1" fill="#e8e8e8"/>
<path d="M600 471h1V486h-1zM606 477h1V486h-1zM612 486h1V495h-1zM616 465h1V486h-1zM623 486h1V509h-1zM629 480h1V486h-1zM636 486h1V520h-1zM662 486h1V500h-1zM666 486h1V509h-1zM690 448h1V486h-1zM692 486h1V501h-1zM696 486h1V518h-1zM706 486h1V538h-1zM708 486h1V536h-1zM712 486h1V515h-1zM724 471h1V486h-1zM727 472h1V486h-1zM731 486h1V503h-1zM736 458h1V486h-1zM740 466h1V486h-1zM743 466h1V486h-1zM746 473h1V486h-1zM750 468h1V486h-1zM752 483h1V486h-1zM757 445h1V486h-1zM759 480h1V486h-1zM764 448h1V486h-1zM766 482h1V486h-1zM770 475h1V486h-1zM774 474h1V486h-1zM777 460h1V486h-1zM780 477h1V486h-1zM784 476h1V486h-1zM788 486h1V486h-1zM791 486h1V492h-1zM795 486h1V507h-1zM800 455h1V486h-1zM802 486h1V498h-1zM808 461h1V486h-1zM810 486h1V507h-1zM812 474h1V486h-1zM816 486h1V500h-1zM820 480h1V486h-1zM823 483h1V486h-1zM826 461h1V486h-1zM829 486h1V516h-1zM834 464h1V486h-1zM837 467h1V486h-1zM841 486h1V526h-1zM844 472h1V486h-1zM847 476h1V486h-1zM850 458h1V486h-1zM853 482h1V486h-1zM862 467h1V486h-1zM866 486h1V529h-1zM868 482h1V486h-1zM873 486h1V503h-1zM876 449h1V486h-1zM879 486h1V503h-1zM883 486h1V506h-1zM885 459h1V486h-1zM891 478h1V486h-1zM893 486h1V532h-1zM896 483h1V486h-1zM901 486h1V501h-1zM904 455h1V486h-1zM907 486h1V509h-1zM907 486h1V513h-1zM915 475h1V486h-1zM916 477h1V486h-1zM921 484h1V486h-1zM922 479h1V486h-1zM928 484h1V486h-1zM928 486h1V490h-1zM933 486h1V513h-1zM936 465h1V486h-1zM939 486h1V518h-1zM945 486h1V537h-1zM948 472h1V486h-1zM955 484h1V486h-1zM964 473h1V486h-1zM965 466h1V486h-1z" fill="#8c8c14" shape-rendering="crispEdges"/>
<path d="M721 486h1V490h-1zM733 486h1V487h-1zM736 484h1V486h-1zM740 486h1V490h-1zM742 477h1V486h-1zM745 480h1V486h-1zM753 486h1V486h-1zM761 486h1V491h-1zM764 485h1V486h-1zM768 486h1V489h-1zM771 486h1V489h-1zM775 486h1V494h-1zM780 486h1V486h-1zM781 486h1V493h-1zM785 480h1V486h-1zM788 473h1V486h-1zM792 486h1V492h-1zM794 477h1V486h-1zM799 486h1V498h-1zM801 486h1V491h-1zM805 475h1V486h-1zM809 486h1V494h-1zM814 485h1V486h-1zM816 481h1V486h-1zM820 486h1V492h-1zM827 479h1V486h-1zM830 481h1V486h-1zM837 477h1V486h-1zM839 486h1V498h-1zM844 486h1V493h-1zM846 475h1V486h-1zM851 486h1V490h-1zM856 479h1V486h-1zM861 473h1V486h-1zM864 486h1V492h-1zM867 486h1V488h-1zM871 484h1V486h-1zM874 475h1V486h-1zM878 486h1V495h-1zM882 486h1V491h-1zM884 486h1V488h-1zM889 484h1V486h-1zM892 486h1V490h-1zM895 486h1V491h-1zM899 486h1V502h-1zM903 486h1V492h-1zM907 486h1V492h-1zM909 485h1V486h-1zM912 484h1V486h-1zM916 486h1V495h-1zM920 486h1V492h-1zM923 486h1V489h-1zM926 486h1V489h-1zM930 486h1V489h-1zM935 485h1V486h-1zM937 481h1V486h-1zM942 482h1V486h-1zM944 476h1V486h-1zM948 486h1V487h-1zM952 486h1V489h-1zM954 486h1V488h-1zM958 486h1V486h-1zM961 484h1V486h-1zM964 480h1V486h-1zM969 485h1V486h-1zM972 483h1V486h-1zM974 486h1V487h-1zM977 486h1V486h-1zM981 486h1V490h-1zM984 485h1V486h-1zM988 485h1V486h-1zM991 481h1V486h-1zM992 486h1V489h-1zM996 485h1V486h-1zM999 481h1V486h-1zM1005 486h1V486h-1z" fill="#0a7c7c" shape-rendering="crispEdges"/>
<path d="M719 488h5v5h-5zM731 485h5v5h-5zM734 482h5v5h-5zM738 488h5v5h-5zM740 475h5v5h-5zM743 478h5v5h-5zM751 484h5v5h-5zM759 489h5v5h-5zM762 483h5v5h-5zM766 487h5v5h-5zM769 487h5v5h-5zM773 492h5v5h-5zM778 484h5v5h-5zM779 491h5v5h-5zM783 478h5v5h-5zM786 471h5v5h-5zM790 490h5v5h-5zM792 475h5v5h-5zM797 496h5v5h-5zM799 489h5v5h-5zM803 473h5v5h-5zM807 492h5v5h-5zM812 483h5v5h-5zM814 479h5v5h-5zM818 490h5v5h-5zM825 477h5v5h-5zM828 479h5v5h-5zM835 475h5v5h-5zM837 496h5v5h-5zM842 491h5v5h-5zM844 473h5v5h-5zM849 488h5v5h-5zM854 477h5v5h-5zM859 471h5v5h-5zM862 490h5v5h-5zM865 486h5v5h-5zM869 482h5v5h-5zM872 473h5v5h-5zM876 493h5v5h-5zM880 489h5v5h-5zM882 486h5v5h-5zM887 482h5v5h-5zM890 488h5v5h-5zM893 489h5v5h-5zM897 500h5v5h-5zM901 490h5v5h-5zM905 490h5v5h-5zM907 483h5v5h-5zM910 482h5v5h-5zM914 493h5v5h-5zM918 490h5v5h-5zM921 487h5v5h-5zM924 487h5v5h-5zM928 487h5v5h-5zM933 483h5v5h-5zM935 479h5v5h-5zM940 480h5v5h-5zM942 474h5v5h-5zM946 485h5v5h-5zM950 487h5v5h-5zM952 486h5v5h-5zM956 484h5v5h-5zM959 482h5v5h-5zM962 478h5v5h-5zM967 483h5v5h-5zM970 481h5v5h-5zM972 485h5v5h-5zM975 484h5v5h-5zM979 488h5v5h-5zM982 483h5v5h-5zM986 483h5v5h-5zM989 479h5v5h-5zM990 487h5v5h-5zM994 483h5v5h-5zM997 479h5v5h-5zM1003 484h5v5h-5z" fill="#00dddd" shape-rendering="crispEdges"/>
<path d="M598 469h5v5h-5zM604 475h5v5h-5zM610 493h5v5h-5zM614 463h5v5h-5zM621 507h5v5h-5zM627 478h5v5h-5zM634 518h5v5h-5zM660 498h5v5h-5zM664 507h5v5h-5zM688 446h5v5h-5zM690 499h5v5h-5zM694 516h5v5h-5zM704 536h5v5h-5zM706 534h5v5h-5zM710 513h5v5h-5zM722 469h5v5h-5zM725 470h5v5h-5zM729 501h5v5h-5zM734 456h5v5h-5zM738 464h5v5h-5zM741 464h5v5h-5zM744 471h5v5h-5zM748 466h5v5h-5zM750 481h5v5h-5zM755 443h5v5h-5zM757 478h5v5h-5zM762 446h5v5h-5zM764 480h5v5h-5zM768 473h5v5h-5zM772 472h5v5h-5zM775 458h5v5h-5zM778 475h5v5h-5zM782 474h5v5h-5zM786 484h5v5h-5zM789 490h5v5h-5zM793 505h5v5h-5zM798 453h5v5h-5zM800 496h5v5h-5zM806 459h5v5h-5zM808 505h5v5h-5zM810 472h5v5h-5zM814 498h5v5h-5zM818 478h5v5h-5zM821 481h5v5h-5zM824 459h5v5h-5zM827 514h5v5h-5zM832 462h5v5h-5zM835 465h5v5h-5zM839 524h5v5h-5zM842 470h5v5h-5zM845 474h5v5h-5zM848 456h5v5h-5zM851 480h5v5h-5zM860 465h5v5h-5zM864 527h5v5h-5zM866 480h5v5h-5zM871 501h5v5h-5zM874 447h5v5h-5zM877 501h5v5h-5zM881 504h5v5h-5zM883 457h5v5h-5zM889 476h5v5h-5zM891 530h5v5h-5zM894 481h5v5h-5zM899 499h5v5h-5zM902 453h5v5h-5zM905 507h5v5h-5zM905 511h5v5h-5zM913 473h5v5h-5zM914 475h5v5h-5zM919 482h5v5h-5zM920 477h5v5h-5zM926 482h5v5h-5zM926 488h5v5h-5zM931 511h5v5h-5zM934 463h5v5h-5zM937 516h5v5h-5zM943 535h5v5h-5zM946 470h5v5h-5zM953 482h5v5h-5zM962 471h5v5h-5zM963 464h5v5h-5z" fill="#ffff33" shape-rendering="crispEdges"/>
<text x="600.5" y="556.1" font-size="10" fill="#b4b4b4" textLength="10.6" lengthAdjust="spacingAndGlyphs" text-anchor="middle" >-0</text>
<text x="641.5" y="556.1" font-size="10" fill="#b4b4b4" textLength="10.6" lengthAdjust="spacingAndGlyphs" text-anchor="middle" >14</text>
<text x="681.5" y="556.1" font-size="10" fill="#b4b4b4" textLength="10.6" lengthAdjust="spacingAndGlyphs" text-anchor="middle" >27</text>
<text x="722.5" y="556.1" font-size="10" fill="#b4b4b4" textLength="10.6" lengthAdjust="spacingAndGlyphs" text-anchor="middle" >41</text>
<text x="762.5" y="556.1" font-size="10" fill="#b4b4b4" textLength="10.6" lengthAdjust="spacingAndGlyphs" text-anchor="middle" >54</text>
<text x="803.5" y="556.1" font-size="10" fill="#b4b4b4" textLength="10.6" lengthAdjust="spacingAndGlyphs" text-anchor="middle" >68</text>
<text x="843.5" y="556.1" font-size="10" fill="#b4b4b4" textLength="10.6" lengthAdjust="spacingAndGlyphs" text-anchor="middle" >82</text>
<text x="883.5" y="556.1" font-size="10" fill="#b4b4b4" textLength="10.6" lengthAdjust="spacingAndGlyphs" text-anchor="middle" >95</text>
<text x="924.5" y="556.1" font-size="10" fill="#b4b4b4" textLength="15.9" lengthAdjust="spacingAndGlyphs" text-anchor="middle" >109</text>
<text x="964.5" y="556.1" font-size="10" fill="#b4b4b4" textLength="15.9" lengthAdjust="spacingAndGlyphs" text-anchor="middle" >122</text>
<text x="1005.5" y="556.1" font-size="10" fill="#b4b4b4" textLength="15.9" lengthAdjust="spacingAndGlyphs" text-anchor="middle" >136</text>
<text x="580.5" y="449.7" font-size="10" fill="#b4b4b4" textLength="21.2" lengthAdjust="spacingAndGlyphs" text-anchor="middle" transform="rotate(-90 580.5 449.7)" >0.09</text>
<text x="580.5" y="486.7" font-size="10" fill="#b4b4b4" textLength="21.2" lengthAdjust="spacingAndGlyphs" text-anchor="middle" transform="rotate(-90 580.5 486.7)" >0.00</text>
<text x="580.5" y="523.7" font-size="10" fill="#b4b4b4" textLength="26.5" lengthAdjust="spacingAndGlyphs" text-anchor="middle" transform="rotate(-90 580.5 523.7)" >-0.09</text>
<text x="567.7" y="491.0" font-size="13" fill="#d8d8d8" textLength="91.0" lengthAdjust="spacingAndGlyphs" text-anchor="middle" transform="rotate(-90 567.7 491.0)" >Vert Res [km]</text>
<text x="803" y="568.6" font-size="13" fill="#e6e6e6" textLength="161.0" lengthAdjust="spacingAndGlyphs" text-anchor="middle" >Length Along Trail [km]</text>
</g>
</svg>
</body>
</html>
